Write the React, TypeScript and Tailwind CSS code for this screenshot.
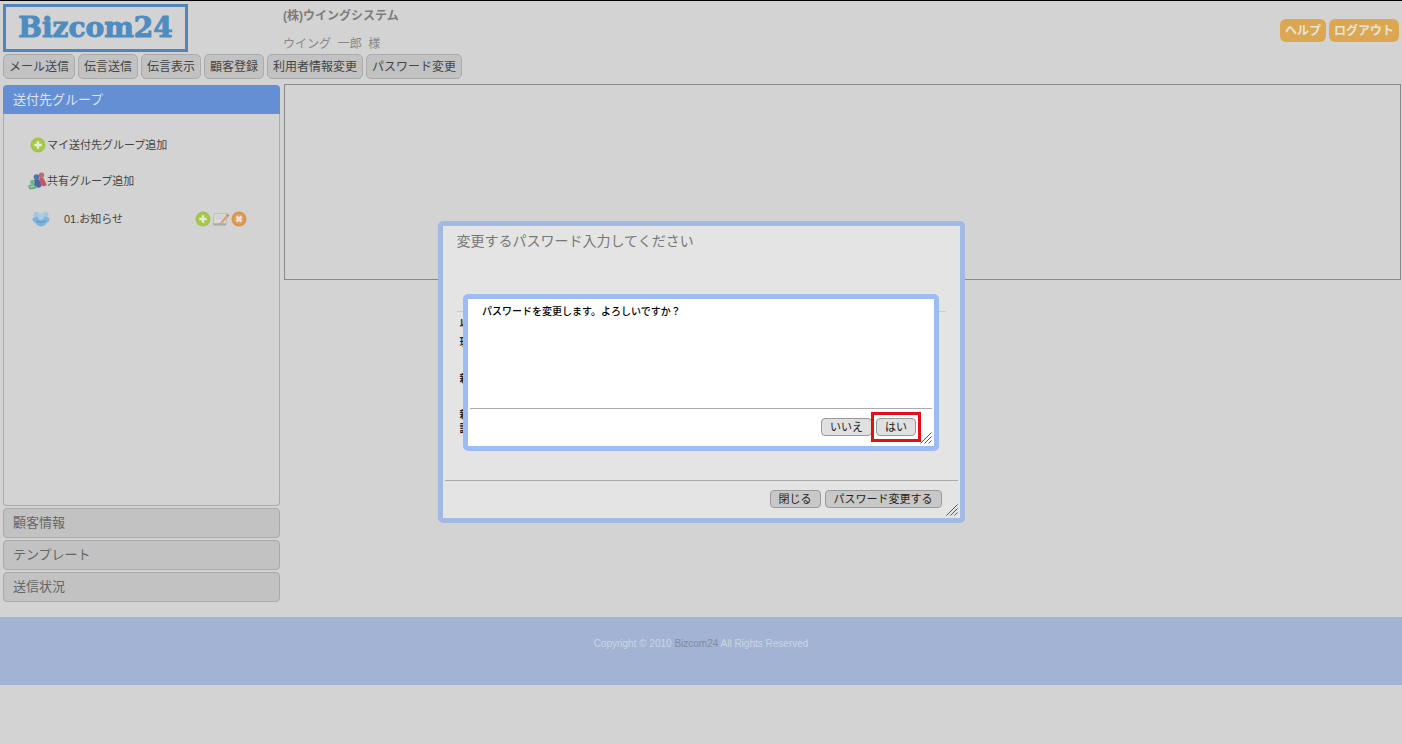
import type { ReactNode } from "react";

const menuItems = ["メール送信", "伝言送信", "伝言表示", "顧客登録", "利用者情報変更", "パスワード変更"];
const sections = ["顧客情報", "テンプレート", "送信状況"];

function AddIcon() {
  return (
    <svg width="16" height="16" viewBox="0 0 16 16" aria-hidden="true">
      <circle cx="8" cy="8" r="7.5" fill="#a3c25a" />
      <circle cx="8" cy="8" r="6" fill="#a6c844" />
      <path d="M8 4.2v7.6M4.2 8h7.6" stroke="#e6ecd2" strokeWidth="2.4" />
    </svg>
  );
}

function DeleteIcon() {
  return (
    <svg width="16" height="16" viewBox="0 0 16 16" aria-hidden="true">
      <circle cx="8" cy="8" r="7.5" fill="#dc9347" />
      <circle cx="8" cy="8" r="5.4" fill="#d8a266" />
      <path d="M5.5 5.5l5 5M10.5 5.5l-5 5" stroke="#f0e2d0" strokeWidth="2.6" />
    </svg>
  );
}

function EditIcon() {
  return (
    <svg width="18" height="16" viewBox="0 0 18 16" aria-hidden="true">
      <path d="M2.5 2.5h13l-1.5 10H1z" fill="#d9d9d7" stroke="#b9b9b7" strokeWidth=".8" />
      <path d="M1 12.5h13.5l-.5 2H1.5z" fill="#a9a9a7" />
      <path d="M4 5h8M3.7 7.5h6" stroke="#c6c6c4" strokeWidth=".8" />
      <path d="M8.5 11l6.8-8 2 1.6-6.9 7.7-2.6.9z" fill="#d3a878" />
      <path d="M15.3 3l2 1.6-1.2 1.3-2-1.6z" fill="#c98478" />
    </svg>
  );
}

function SharedIcon() {
  return (
    <svg width="19" height="18" viewBox="0 0 19 18" aria-hidden="true">
      <circle cx="13.5" cy="3.2" r="2.7" fill="#c2696d" />
      <path d="M11 6.5c2-1.500 4.500-1 5.300 1l2.500 5.500-3 1.500-4-2z" fill="#bf5a60" />
      <circle cx="8.500" cy="5" r="2.800" fill="#5871a8" />
      <path d="M6 8c2-1.500 4.500-1.500 5.500.5l2 6-3 1.500-4.500-2.500z" fill="#4c66a2" />
      <circle cx="4.500" cy="10.200" r="2.400" fill="#78b48a" />
      <path d="M0 14.500c1-2 4-2.500 5.500-2l4 2.500-2.500 2-5.500.5z" fill="#6bb07c" />
      <path d="M2 15l4-.8" stroke="#b4d6b9" />
    </svg>
  );
}

function GroupIcon() {
  return (
    <svg width="18" height="16" viewBox="0 0 18 16" aria-hidden="true">
      <circle cx="4.500" cy="3.800" r="3" fill="#a0c6e0" />
      <circle cx="13.500" cy="3.800" r="3" fill="#a0c6e0" />
      <path d="M.5 8C1 6 4 5.500 9 5.500S17 6 17.500 8c0 2-1 3.500-3 4-1 2-3 3.500-5.500 3.500S4.500 14 3.500 12c-2-.5-3-2-3-4z" fill="#7fb4dc" />
      <circle cx="9" cy="5.500" r="3.200" fill="#aacde4" />
      <path d="M4.500 9.500c1.500 2.200 7.500 2.200 9 0" fill="none" stroke="#5f9fd1" strokeWidth="1.500" />
    </svg>
  );
}

function Grip() {
  return (
    <svg width="12" height="12" viewBox="0 0 12 12" className="absolute right-[2px] bottom-[2px]" aria-hidden="true">
      <path d="M0.500 11.500l11-11M4.500 11.500l7-7M8.500 11.500l3-3" stroke="#555" fill="none" />
    </svg>
  );
}

function DialogButton({ children }: { children: ReactNode }) {
  return (
    <button
      type="button"
      className="h-[18px] rounded border border-[#999] bg-black/12 px-2 text-[11px] leading-4 text-[#222]"
    >
      {children}
    </button>
  );
}

function Field({ id, label }: { id: string; label: string }) {
  return (
    <div className="flex h-9 items-start">
      <label htmlFor={id} className="w-[92px] shrink-0 text-[10px] leading-[14px] font-bold text-[#222]">
        {label}
      </label>
      <input id={id} type="password" className="h-5 w-40 border border-[#aaa]" />
    </div>
  );
}

export default function App() {
  return (
    <div className="min-h-screen border-t border-black bg-[#d3d3d3] font-['Liberation_Sans','Noto_Sans_CJK_JP',sans-serif] text-[#555]">
      <header className="px-[3px] pt-[3px]">
        <div className="flex items-start">
          <h1 className="flex h-12 w-[185px] shrink-0 items-center justify-center border-3 border-[#5085bd] font-['DejaVu_Serif',serif] text-[28px] font-bold text-[#4f8cc0] [-webkit-text-stroke:1px_#4f8cc0]">
            Bizcom24
          </h1>
          <div className="ml-[95px] flex-1 text-xs text-[#888]">
            <p className="mt-1 font-bold text-[#7f7b79]">(株)ウイングシステム</p>
            <p className="mt-3 whitespace-pre">ウイング  一郎  様</p>
          </div>
          <div className="mt-[15px] flex gap-[3px]">
            <button type="button" className="h-[23px] rounded-md bg-[#dba752] px-[5px] text-xs font-bold text-[#e8e4dc]">
              ヘルプ
            </button>
            <button type="button" className="h-[23px] rounded-md bg-[#dba752] px-[5px] text-xs font-bold text-[#e8e4dc]">
              ログアウト
            </button>
          </div>
        </div>
        <nav className="mt-[2px] flex gap-[3px]">
          {menuItems.map((item) => (
            <button
              key={item}
              type="button"
              className="h-[25px] rounded-[5px] border border-[#aaa] bg-[#c2c2c2] px-[5px] text-xs text-[#444]"
            >
              {item}
            </button>
          ))}
        </nav>
      </header>

      <div className="mt-[5px] flex items-start gap-1 pr-px pl-[3px]">
        <aside className="mt-px w-[277px] shrink-0">
          <button
            type="button"
            className="block h-[29px] w-full rounded-t bg-[#648fd4] px-[10px] text-left text-[13px] text-[#dce3ee]"
          >
            送付先グループ
          </button>
          <div className="h-[392px] rounded-b border border-t-0 border-[#aaa] pt-[23px] pl-[26px] text-[11px] text-[#444]">
            <a href="#my-group" className="flex h-4 items-center gap-px">
              <AddIcon />
              マイ送付先グループ追加
            </a>
            <a href="#shared-group" className="mt-5 -ml-[2px] flex h-4 items-center">
              <SharedIcon />
              共有グループ追加
            </a>
            <div className="mt-[22px] flex h-4 items-center pl-[2px]">
              <GroupIcon />
              <span className="ml-[14px] w-[131px]">01.お知らせ</span>
              <button type="button" aria-label="追加">
                <AddIcon />
              </button>
              <button type="button" aria-label="編集" className="mx-px">
                <EditIcon />
              </button>
              <button type="button" aria-label="削除">
                <DeleteIcon />
              </button>
            </div>
          </div>
          {sections.map((section) => (
            <button
              key={section}
              type="button"
              className="mt-[2px] block h-[30px] w-full rounded border border-[#aaa] bg-[#c2c2c2] px-[9px] text-left text-[13px] text-[#666]"
            >
              {section}
            </button>
          ))}
        </aside>
        <main className="h-[196px] flex-1 border border-[#888]" />
      </div>

      <footer className="mt-[15px] h-[68px] bg-[#a3b3d3] pt-5 text-center text-[10px] leading-[14px] text-[#c9d6e2]">
        Copyright © 2010{" "}
        <a href="#top" className="text-[#828b99]">
          Bizcom24
        </a>{" "}
        All Rights Reserved
      </footer>

      <div className="fixed inset-0 flex items-center justify-center">
        <section
          role="dialog"
          aria-labelledby="password-title"
          className="relative flex h-[302px] w-[527px] flex-col rounded-[5px] border-5 border-[#a3b9e3] bg-[#e4e4e4]"
        >
          <h2 id="password-title" className="px-[14px] pt-[5px] text-sm text-[#777]">
            変更するパスワード入力してください
          </h2>
          <div className="mx-[14px] mt-[60px] flex-1 border-t border-[#ccc] pt-[5px] pl-[3px]">
            <p className="mb-[5px] text-[10px] leading-[14px] font-bold text-[#222]">以下を入力</p>
            <Field id="current" label="現在のパスワード" />
            <Field id="new" label="新しいパスワード" />
            <Field id="confirm" label="新しいパスワード確認" />
          </div>
          <div className="mx-[2px] flex h-[38px] shrink-0 items-start justify-end gap-1 border-t border-[#aaa] pt-[9px] pr-4">
            <DialogButton>閉じる</DialogButton>
            <DialogButton>パスワード変更する</DialogButton>
          </div>
          <Grip />
        </section>
      </div>

      <div className="fixed inset-0 flex items-center justify-center">
        <section
          role="alertdialog"
          aria-labelledby="confirm-text"
          className="relative flex h-[157px] w-[476px] flex-col rounded-[5px] border-5 border-[#9dbcf5] bg-white"
        >
          <p id="confirm-text" className="flex-1 px-[14px] pt-[5px] text-[10px] leading-4 font-medium text-black">
            パスワードを変更します。よろしいですか？
          </p>
          <div className="mx-[2px] flex h-[38px] items-start justify-end gap-1 border-t border-[#aaa] pt-[9px] pr-4">
            <DialogButton>いいえ</DialogButton>
            <span className="relative flex">
              <DialogButton>はい</DialogButton>
              <span className="pointer-events-none absolute -inset-x-[5px] -inset-y-[6px] border-3 border-[#e60e16]" />
            </span>
          </div>
          <Grip />
        </section>
      </div>
    </div>
  );
}
